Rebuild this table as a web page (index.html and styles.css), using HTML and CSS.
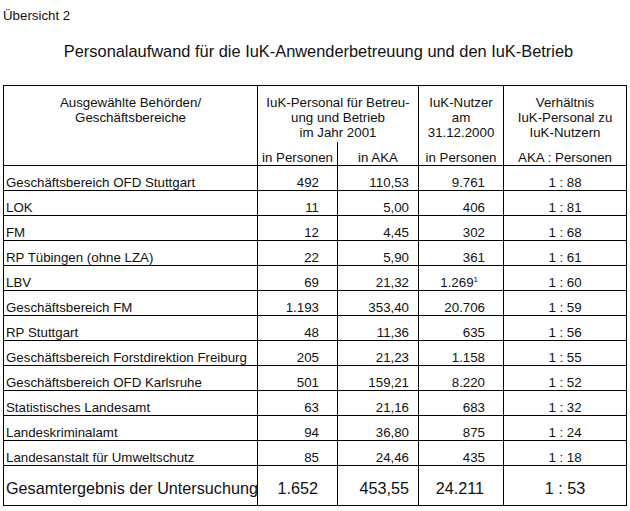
FILE: index.html
```html
<!DOCTYPE html>
<html lang="de">
<head>
<meta charset="utf-8">
<title>Übersicht 2</title>
<link rel="stylesheet" href="styles.css">
</head>
<body>
<div class="page">
  <div class="title">Übersicht 2</div>
  <div class="subtitle">Personalaufwand für die IuK-Anwenderbetreuung und den IuK-Betrieb</div>
  <table class="grid">
    <colgroup>
      <col class="c1"><col class="c2"><col class="c3"><col class="c4"><col class="c5">
    </colgroup>
    <thead>
      <tr class="h1">
        <th rowspan="2" class="hname">Ausgewählte Behörden/<br>Geschäftsbereiche</th>
        <th colspan="2" class="open">IuK-Personal für Betreu-<br>ung und Betrieb<br>im Jahr 2001</th>
        <th class="open">IuK-Nutzer<br>am<br>31.12.2000</th>
        <th class="open">Verhältnis<br>IuK-Personal zu<br>IuK-Nutzern</th>
      </tr>
      <tr class="h2">
        <th>in Personen</th>
        <th>in AKA</th>
        <th>in Personen</th>
        <th>AKA : Personen</th>
      </tr>
    </thead>
    <tbody>
      <tr><td class="name">Geschäftsbereich OFD Stuttgart</td><td class="n">492</td><td class="a">110,53</td><td class="n">9.761</td><td class="r">1 : 88</td></tr>
      <tr><td class="name">LOK</td><td class="n">11</td><td class="a">5,00</td><td class="n">406</td><td class="r">1 : 81</td></tr>
      <tr><td class="name">FM</td><td class="n">12</td><td class="a">4,45</td><td class="n">302</td><td class="r">1 : 68</td></tr>
      <tr><td class="name">RP Tübingen (ohne LZA)</td><td class="n">22</td><td class="a">5,90</td><td class="n">361</td><td class="r">1 : 61</td></tr>
      <tr><td class="name">LBV</td><td class="n">69</td><td class="a">21,32</td><td class="n">1.269<sup class="fn">1</sup></td><td class="r">1 : 60</td></tr>
      <tr><td class="name">Geschäftsbereich FM</td><td class="n">1.193</td><td class="a">353,40</td><td class="n">20.706</td><td class="r">1 : 59</td></tr>
      <tr><td class="name">RP Stuttgart</td><td class="n">48</td><td class="a">11,36</td><td class="n">635</td><td class="r">1 : 56</td></tr>
      <tr><td class="name">Geschäftsbereich Forstdirektion Freiburg</td><td class="n">205</td><td class="a">21,23</td><td class="n">1.158</td><td class="r">1 : 55</td></tr>
      <tr><td class="name">Geschäftsbereich OFD Karlsruhe</td><td class="n">501</td><td class="a">159,21</td><td class="n">8.220</td><td class="r">1 : 52</td></tr>
      <tr><td class="name">Statistisches Landesamt</td><td class="n">63</td><td class="a">21,16</td><td class="n">683</td><td class="r">1 : 32</td></tr>
      <tr><td class="name">Landeskriminalamt</td><td class="n">94</td><td class="a">36,80</td><td class="n">875</td><td class="r">1 : 24</td></tr>
      <tr><td class="name">Landesanstalt für Umweltschutz</td><td class="n">85</td><td class="a">24,46</td><td class="n">435</td><td class="r">1 : 18</td></tr>
      <tr class="total"><td class="name">Gesamtergebnis der Untersuchung</td><td class="n">1.652</td><td class="a">453,55</td><td class="n">24.211</td><td class="r">1 : 53</td></tr>
    </tbody>
  </table>
</div>
</body>
</html>
```

FILE: styles.css
```css
html, body {
  margin: 0;
  padding: 0;
  background: #ffffff;
}

.page {
  padding: 8px 0 0 3px;
  font-family: "Liberation Sans", Arial, sans-serif;
  color: #111111;
}

.title {
  font-size: 13.3px;
  line-height: 16px;
}

.subtitle {
  margin-top: 17px;
  font-size: 16.4px;
  line-height: 20px;
  text-align: center;
  padding-left: 2px;
  width: 627px;
}

.grid {
  margin-top: 24px;
  border-spacing: 0;
  border-collapse: separate;
  table-layout: fixed;
  width: 624px;
  border-top: 1px solid #000;
  border-left: 1px solid #000;
  font-size: 13.3px;
  line-height: 15px;
}

.c1 { width: 254px; }
.c2 { width: 80px; }
.c3 { width: 81px; }
.c4 { width: 85px; }
.c5 { width: 123px; }

.grid th,
.grid td {
  border-right: 1px solid #000;
  border-bottom: 1px solid #000;
  padding: 0 2px;
  font-weight: normal;
  white-space: nowrap;
  vertical-align: bottom;
  box-sizing: border-box;
}

.grid .h1 { height: 56px; }
.grid .h1 th {
  vertical-align: top;
  padding-top: 9px;
  text-align: center;
}
.grid .h1 th.open { border-bottom: none; }

.grid .h2 { height: 24px; }
.grid .h2 th {
  text-align: center;
  padding: 0;
}

.grid tbody tr { height: 25px; }

.grid td.name { text-align: left; padding-left: 2px; }
.grid td.n { text-align: right; padding-right: 18px; }
.grid td.a { text-align: right; padding-right: 9px; }
.grid td.r { text-align: center; padding: 0; }

.fn {
  font-size: 8px;
  line-height: 0;
  vertical-align: 5px;
  margin-right: 7px;
}

.grid tr.total { height: 40px; }
.grid tr.total td {
  font-size: 16.2px;
  line-height: 18px;
  padding-bottom: 8px;
}
.grid tr.total td.n { padding-right: 19px; }
.grid tr.total td.r { padding-right: 0; }
```
